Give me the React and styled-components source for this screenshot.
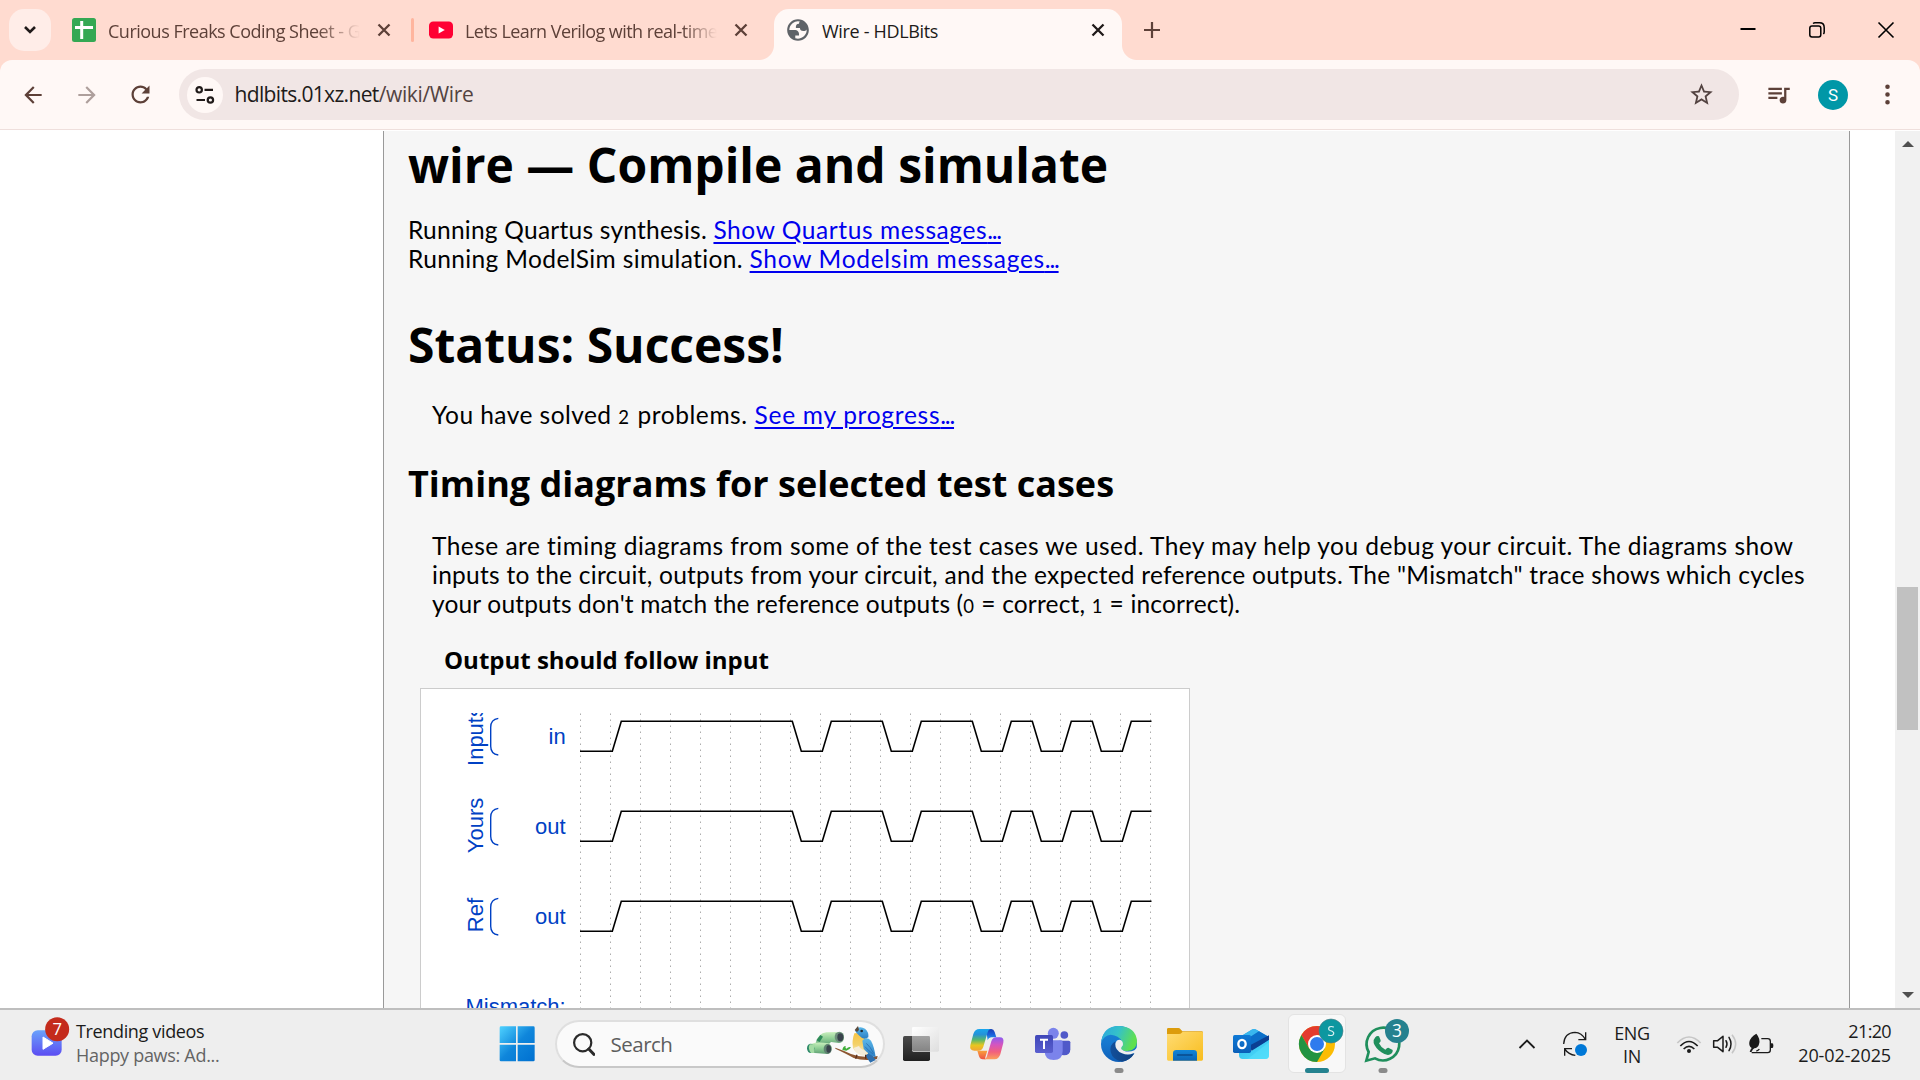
import React from 'react';
import styled, { createGlobalStyle, css } from 'styled-components';

const GlobalStyle = createGlobalStyle`
  * { box-sizing: border-box; }
  body { margin: 0; overflow: hidden; background: #fff; }
  svg { display: block; flex: none; }
`;

const ui = '"Open Sans", "Noto Sans", sans-serif';
const body = 'Lato, "Open Sans", sans-serif';

const Screen = styled.div`
  width: 1920px;
  height: 1080px;
  display: flex;
  flex-direction: column;
  overflow: hidden;
  font-family: ${ui};
`;

/* ---------- tab strip ---------- */

const TabStrip = styled.div`
  flex: none;
  height: 60px;
  display: flex;
  align-items: stretch;
  background: #ffdbd0;
`;

const TabSearch = styled.button`
  width: 42px;
  height: 42px;
  margin: 9px 6px 0 9px;
  padding: 0;
  border: 0;
  border-radius: 15px;
  background: #ffede8;
  display: grid;
  place-items: center;
`;

const Tab = styled.div`
  position: relative;
  width: ${(p) => p.$width}px;
  height: ${(p) => (p.$active ? 51 : 60)}px;
  align-self: flex-end;
  padding: 0 ${(p) => p.$right}px 0 ${(p) => p.$left}px;
  display: flex;
  align-items: center;
  color: ${(p) => (p.$active ? '#201a19' : '#5d4038')};
  ${(p) =>
    p.$active &&
    css`
      padding-bottom: 9px;
      background: #fff8f6;
      border-radius: 15px 15px 0 0;
      &::before,
      &::after {
        content: '';
        position: absolute;
        bottom: 0;
        width: 15px;
        height: 15px;
      }
      &::before {
        left: -15px;
        background: radial-gradient(circle at 0 0, transparent 14.5px, #fff8f6 15.5px);
      }
      &::after {
        right: -15px;
        background: radial-gradient(circle at 100% 0, transparent 14.5px, #fff8f6 15.5px);
      }
    `}
`;

const TabTitle = styled.span`
  flex: 1;
  min-width: 0;
  margin: 1px 11px 0 ${(p) => p.$gap || 12}px;
  overflow: hidden;
  white-space: nowrap;
  font-size: 18px;
  line-height: 26px;
  letter-spacing: ${(p) => p.$track}px;
  ${(p) =>
    p.$fade &&
    css`
      mask-image: linear-gradient(to right, #000 calc(100% - ${p.$fade}px), transparent calc(100% - 1px));
    `}
`;

const TabDivider = styled.div`
  width: 3px;
  height: 24px;
  margin-top: 18px;
  border-radius: 2px;
  background: #ffb59e;
`;

const NewTab = styled.div`
  width: 60px;
  display: grid;
  place-items: center;
`;

const WindowButtons = styled.div`
  margin-left: auto;
  display: flex;
`;

const WindowButton = styled.div`
  width: 69px;
  display: grid;
  place-items: center;
`;

/* ---------- toolbar ---------- */

const ToolbarBack = styled.div`
  flex: none;
  height: 71px;
  background: linear-gradient(#ffdbd0 30px, #fff 30px);
`;

const Toolbar = styled.div`
  height: 70px;
  display: flex;
  align-items: flex-start;
  padding-top: 9px;
  background: #fff8f6;
  border-bottom: 1px solid #efdfdc;
  border-radius: 12px 12px 0 0;
`;

const NavButton = styled.div`
  flex: none;
  width: ${(p) => p.$width || 54}px;
  height: 51px;
  display: grid;
  place-items: center;
  color: ${(p) => p.$color || '#5d4038'};
`;

const Omnibox = styled.div`
  flex: none;
  width: 1560px;
  height: 51px;
  margin-left: 6px;
  padding: 0 24px 0 8px;
  border-radius: 26px;
  background: #f1e6e5;
  display: flex;
  align-items: center;
`;

const SiteChip = styled.div`
  width: 36px;
  height: 36px;
  border-radius: 50%;
  background: #fff8f6;
  display: grid;
  place-items: center;
`;

const Url = styled.div`
  flex: 1;
  margin-left: 11.5px;
  font-size: 21px;
  line-height: 29px;
  white-space: nowrap;
  color: #201a19;
  letter-spacing: -0.66px;
`;

const UrlPath = styled.span`
  color: #534341;
  letter-spacing: -0.36px;
`;

const Avatar = styled.div`
  flex: none;
  width: 30px;
  height: 30px;
  margin: 11px 24px 0 0;
  border-radius: 50%;
  background: #0097a7;
  color: #fff;
  font: 17px/31px Roboto, sans-serif;
  text-align: center;
`;

/* ---------- page ---------- */

const Viewport = styled.div`
  flex: 1;
  min-height: 0;
  display: flex;
  background: #fff;
`;

const Panel = styled.main`
  width: 1467px;
  margin-left: 383px;
  padding: 1px 0 0 24px;
  border-left: 1px solid #999;
  border-right: 1px solid #999;
  background: #f6f6f6;
  overflow: hidden;
  color: #000;
`;

const Heading = styled.h1`
  margin: 0 0 ${(p) => p.$after}px;
  font: bold 48px/65px ${ui};
`;

const SubHeading = styled.h2`
  margin: 30px 0 23px;
  font: bold 36px/49px ${ui};
`;

const CaseTitle = styled.h3`
  margin: 25px 0 12px;
  padding-left: 36px;
  font: bold 24px/33px ${ui};
`;

const Text = styled.p`
  margin: 0 0 ${(p) => p.$after || 0}px;
  padding-left: ${(p) => (p.$indent ? 24 : 0)}px;
  font: 24.5px/29px ${body};
  white-space: nowrap;
`;

const Line = styled.span`
  display: block;
`;

const Run = styled.span`
  letter-spacing: ${(p) => p.$track}px;
`;

const Digit = styled.span`
  font-size: 18.5px;
  line-height: 1;
  letter-spacing: ${(p) => p.$track || 0.8}px;
`;

const Link = styled.a`
  color: #0000ee;
  letter-spacing: ${(p) => p.$track}px;
  text-decoration: underline;
  text-decoration-thickness: 2px;
  text-underline-offset: 3px;
`;

const Dots = styled.span`
  letter-spacing: -1.2px;
`;

const WaveBox = styled.div`
  width: 770px;
  height: 420px;
  margin-left: 12px;
  padding: 24px;
  border: 1px solid #ccc;
  background: #fff;
`;

const WaveText = styled.text`
  font: 22px "Liberation Sans", Arial, sans-serif;
  fill: #0041c4;
`;

const ScrollBar = styled.div`
  width: 25px;
  margin-left: auto;
  padding: 10px 2px 10px;
  display: flex;
  flex-direction: column;
  align-items: center;
  justify-content: space-between;
  background: #f1f1f1;
`;

const ScrollThumb = styled.div`
  width: 21px;
  height: 143px;
  margin: 440px 0 auto;
  background: #c1c1c1;
`;

/* ---------- taskbar ---------- */

const Taskbar = styled.footer`
  flex: none;
  height: 72px;
  display: flex;
  border-top: 2px solid #bebebe;
  background: #eeeeee;
`;

const Widget = styled.div`
  width: 484px;
  padding: 6px 0 0 31px;
  display: flex;
  align-items: flex-start;
`;

const WidgetText = styled.div`
  margin: 3px 0 0 5px;
  font-size: 18px;
  line-height: 24px;
  white-space: nowrap;
`;

const WidgetLine = styled.div`
  color: ${(p) => (p.$muted ? '#646464' : '#1b1b1b')};
  letter-spacing: ${(p) => (p.$muted ? -0.3 : -0.35)}px;
`;

const SearchBox = styled.div`
  width: 330px;
  height: 48px;
  margin: 10px 3px 0 5px;
  padding: 0 4px 0 16px;
  border: 2px solid #dfdfdf;
  border-bottom-color: #c8c8c8;
  border-radius: 24px;
  background: #fafafa;
  display: flex;
  align-items: center;
`;

const SearchLabel = styled.span`
  flex: 1;
  margin-left: 15.5px;
  font-size: 20.5px;
  line-height: 28px;
  letter-spacing: -0.5px;
  color: #5d5d5d;
`;

const Slot = styled.div`
  position: relative;
  width: 66px;
  padding-top: 16px;
  display: flex;
  justify-content: center;
`;

const ActiveSlot = styled(Slot)`
  width: 58px;
  height: 59px;
  margin: 4px 4px 0;
  padding-top: 11px;
  border: 1px solid #e3e3e3;
  border-radius: 6px;
  background: #f8f8f8;
`;

const Indicator = styled.div`
  position: absolute;
  left: 50%;
  top: ${(p) => (p.$active ? 53 : 58)}px;
  width: ${(p) => (p.$active ? 24 : 9)}px;
  height: 5px;
  transform: translateX(-50%);
  border-radius: 3px;
  background: ${(p) => (p.$active ? '#24828f' : '#8a8a8a')};
`;

const Tray = styled.div`
  margin-left: auto;
  padding-right: 29px;
  display: flex;
  align-items: flex-start;
  color: #1b1b1b;
  font-size: 18px;
  line-height: 23px;
  white-space: nowrap;
`;

const TrayIcon = styled.div`
  width: ${(p) => p.$width}px;
  height: 68px;
  margin-right: ${(p) => p.$gap}px;
  display: grid;
  place-items: center;
`;

const Language = styled.div`
  width: 36px;
  margin: 12px 26px 0 0;
  text-align: center;
  letter-spacing: -0.3px;
`;

const Clock = styled.div`
  width: 96px;
  margin-top: 9px;
  text-align: right;
  line-height: 24px;
`;

const Time = styled.div`
  letter-spacing: -0.65px;
`;

const DateText = styled.div`
  letter-spacing: -0.12px;
`;

/* ---------- small icons ---------- */

const Cross = ({ size = 11, w = 2.3, color = 'currentColor', box = 24 }) => (
  <svg width={box} height={box} viewBox={`${-box / 2} ${-box / 2} ${box} ${box}`}>
    <path
      d={`M${-size / 2} ${-size / 2}L${size / 2} ${size / 2}M${size / 2} ${-size / 2}L${-size / 2} ${size / 2}`}
      stroke={color}
      strokeWidth={w}
    />
  </svg>
);

const SheetsIcon = () => (
  <svg width="24" height="24" viewBox="0 0 24 24">
    <rect width="24" height="24" rx="2.5" fill="#34a853" />
    <path d="M3 9.5h18M9.7 3v18" stroke="#fff" strokeWidth="3" />
  </svg>
);

const YoutubeIcon = () => (
  <svg width="24" height="24" viewBox="0 0 24 24">
    <rect y="3.6" width="24" height="16.8" rx="4.2" fill="#ff0033" />
    <path d="M9.6 8.5v7l6.2-3.5z" fill="#fff" />
  </svg>
);

const GlobeIcon = () => (
  <svg width="26" height="26" viewBox="0 0 24 24" fill="#5f6368">
    <path fillRule="evenodd" d="M12 2C6.48 2 2 6.48 2 12s4.48 10 10 10 10-4.48 10-10S17.52 2 12 2zM4 12h4.4c3.407.022 4.922 1.73 4.543 5.127H9.488v2.47a8.004 8.004 0 0 0 10.498-8.083C19.327 12.504 18.332 13 17 13c-2.137 0-3.206-.916-3.206-2.75h-3.748c-.274-2.728.683-4.092 2.87-4.092 0-.975.327-1.597.811-1.97A8.004 8.004 0 0 0 4 12z" />
  </svg>
);

const MatIcon = ({ d, size = 24 }) => (
  <svg width={size} height={size} viewBox="0 0 24 24" fill="currentColor">
    <path d={d} />
  </svg>
);

const TuneIcon = () => (
  <svg width="22" height="20" viewBox="0 0 22 20" fill="none" stroke="#201a19" strokeWidth="2.2">
    <circle cx="5.2" cy="4.8" r="2.7" />
    <path d="M10.5 4.8h8.5M2.5 15h8.5" />
    <circle cx="16.4" cy="15" r="2.7" />
  </svg>
);

/* ---------- timing diagram ---------- */

const FALLS = [[792.3, 822.3], [882.3, 912.3], [972.3, 1002.3], [1032.3, 1062.3], [1092.3, 1122.3]];

const wavePath = (high) => {
  const low = high + 30;
  let d = `M580 ${low}H612.3L621.3 ${high}`;
  FALLS.forEach(([fall, rise]) => {
    d += `H${fall}L${fall + 9} ${low}H${rise}L${rise + 9} ${high}`;
  });
  return `${d}H1151.5`;
};

const SIGNALS = [
  { group: 'Inputs', label: 'in', high: 721.2, mid: 736 },
  { group: 'Yours', label: 'out', high: 811.2, mid: 825.5 },
  { group: 'Ref', label: 'out', high: 901.2, mid: 915 },
];

const TimingDiagram = () => (
  <svg width="720" height="295" viewBox="445 713 720 295">
    {Array.from({ length: 20 }, (_, i) => (
      <path key={i} d={`M${580.5 + i * 30} 713.6V1008`} stroke="#999" strokeWidth="1" strokeDasharray="1.2 4.8" />
    ))}
    {SIGNALS.map((s) => (
      <g key={s.group}>
        <path d={wavePath(s.high)} fill="none" stroke="#000" strokeWidth="1.6" />
        <WaveText x="565.7" y={s.high + 22.7} textAnchor="end">{s.label}</WaveText>
        <WaveText transform={`translate(483 ${s.mid}) rotate(-90)`} textAnchor="middle">{s.group}</WaveText>
        <path
          d={`M498.3 ${s.high - 2.8}C493 ${s.high - 2} 490.7 ${s.high + 2} 490.7 ${s.high + 6}V${s.high + 25}C490.7 ${s.high + 29} 493 ${s.high + 33} 498.3 ${s.high + 33.8}`}
          fill="none"
          stroke="#0041c4"
          strokeWidth="1.4"
        />
      </g>
    ))}
    <WaveText x="565.7" y="1014" textAnchor="end">Mismatch:</WaveText>
  </svg>
);

/* ---------- taskbar icons ---------- */

const AppIcon = ({ x, children, y = 78, w = 108, h = 108 }) => (
  <svg width={w / 3} height={h / 3} viewBox={`${x} ${y} ${w} ${h}`} overflow="visible">
    {children}
  </svg>
);

const Stops = ({ id, colors, x2 = 0, y2 = 1 }) => (
  <linearGradient id={id} x1="0" y1="0" x2={x2} y2={y2}>
    {colors.map((c, i) => (
      <stop key={c} offset={i / (colors.length - 1)} stopColor={c} />
    ))}
  </linearGradient>
);

const BadgeText = styled.text`
  font: ${(p) => p.$size}px ${ui};
  fill: #fff;
  text-anchor: middle;
`;

const WidgetIcon = () => (
  <svg width="40" height="42" viewBox="94 48 120 126">
    <defs><Stops id="wg" colors={['#6aa2fb', '#5c4df2']} /></defs>
    <rect x="96" y="91" width="90" height="76" rx="18" fill="url(#wg)" />
    <path d="M130 111v37l30-18.500z" fill="#fff" stroke="#fff" strokeWidth="3" strokeLinejoin="round" />
    <circle cx="172.500" cy="88" r="36" fill="#c42b1c" />
    <BadgeText $size={50} x="172.500" y="106">7</BadgeText>
  </svg>
);

const StartIcon = () => (
  <AppIcon x={58} y={80}>
    <defs><Stops id="st" colors={['#4fd2ff', '#0f86db', '#0070d0']} x2={1} /></defs>
    <path d="M60 85q0-4 4-4H109V131H60zM114 81h47q4 0 4 4V131H114zM60 136H109V186H64q-4 0-4-4zM114 136H165V182q0 4-4 4H114z" fill="url(#st)" />
  </AppIcon>
);

const BirdIcon = () => (
  <svg width="74" height="40" viewBox="972 72 222 120">
    <defs>
      <Stops id="bn" colors={['#c9efbd', '#8fcf95', '#5f9f74']} />
      <Stops id="bb" colors={['#f6c445', '#f3d168', '#fbf3dd']} />
      <Stops id="bw" colors={['#5bb8ea', '#2c7fc4']} />
    </defs>
    <path d="M1004 128Q1012 100 1036 97L1078 96Q1090 100 1089 114T1074 129L1050 126 1040 136z" fill="url(#bn)" />
    <ellipse cx="1075" cy="111" rx="14" ry="16" fill="#6d8f7c" />
    <ellipse cx="1078" cy="112" rx="9" ry="12" fill="#39434c" />
    <path d="M1006 121l12-16 8 5-10 16z" fill="#2f8a5a" />
    <path d="M992 131Q1010 124 1042 130 1054 136 1052 147T1040 162L992 158z" fill="url(#bn)" />
    <ellipse cx="989" cy="145" rx="11" ry="14" fill="#2f8a6a" />
    <path d="M986 133h18q-8 10-4 26h-10q-10-12-4-26z" fill="#a4dca4" />
    <ellipse cx="1040" cy="147" rx="12" ry="15" fill="#5f8271" />
    <ellipse cx="1043" cy="147" rx="7" ry="11" fill="#39434c" />
    <path d="M1063 143Q1090 152 1110 162 1145 176 1190 168L1188 177Q1150 184 1118 174 1098 162 1063 146z" fill="#8d5630" />
    <path d="M1084 150q2-12 10-12-2 6 2 8 8-8 14-4-4 8-14 10z" fill="#3fae3a" />
    <path d="M1148 160l20-4 16 24-16 8z" fill="#2e6fae" />
    <path d="M1120 100Q1112 122 1116 144 1126 164 1150 168 1172 160 1166 132L1148 98z" fill="url(#bb)" />
    <path d="M1118 144q8 20 32 24l8-14q-22-6-24-16z" fill="#f4ecd9" />
    <path d="M1128 84Q1140 78 1152 86 1164 96 1162 112 1148 122 1136 108 1126 100 1122 92z" fill="url(#bw)" />
    <path d="M1144 122Q1156 108 1170 122 1180 140 1184 172 1160 162 1148 146z" fill="url(#bw)" />
    <path d="M1156 130q12 10 22 30M1152 140q10 12 24 22" stroke="#2a6fb0" strokeWidth="2.500" fill="none" />
    <path d="M1121 90l10-12 3 12-6 6z" fill="#5b4a3c" />
    <circle cx="1142" cy="93" r="4" fill="#1f2a33" />
    <path d="M1128 164l-4 12M1154 164v12" stroke="#5a2d1a" strokeWidth="4" />
  </svg>
);

const TaskViewIcon = () => (
  <AppIcon x={1269}>
    <defs>
      <Stops id="tv" colors={['#4a4a4a', '#202020']} />
      <Stops id="tw" colors={['#ffffff', '#dedede']} x2={1} />
      <Stops id="tg" colors={['#a2a2a2', '#858585']} />
    </defs>
    <rect x="1269" y="108" width="81" height="75" rx="5" fill="url(#tv)" />
    <rect x="1296" y="81" width="81" height="74" rx="4" fill="url(#tw)" />
    <path d="M1296 108H1346q4 0 4 4V153H1300q-4 0-4-4z" fill="url(#tg)" />
  </AppIcon>
);

const CopilotIcon = () => (
  <AppIcon x={87}>
    <defs>
      <Stops id="ca" colors={['#18a6ee', '#2592d8', '#59b86a', '#e8c61f', '#f3a533']} />
      <Stops id="cb" colors={['#8d5cf0', '#d455c0', '#f2607c', '#fba05a']} />
      <Stops id="cc" colors={['#1a3fb4', '#1b62dc', '#2aa9ee']} />
      <Stops id="cd" colors={['#f9a13c', '#ee5145']} />
    </defs>
    <path d="M138 87h16q7 0 10 9l5 16h-14q-9 0-12 9z" fill="url(#cc)" />
    <path d="M112 152h30l-6 20q-2 6 2 6h-10q-8 0-11-9z" fill="url(#cd)" />
    <path d="M118 87h36q-8 0-11 10l-13 43q-4 12-15 12h-12q-15 0-12-16l9-34q5-15 18-15z" fill="url(#ca)" />
    <path d="M164 178h-34q8 0 11-10l13-44q4-12 15-12h10q14 0 11 16l-9 35q-5 15-17 15z" fill="url(#cb)" />
  </AppIcon>
);

const TeamsIcon = () => (
  <AppIcon x={285}>
    <defs><Stops id="ta" colors={['#3f46b8', '#5a5fcf']} /></defs>
    <circle cx="373" cy="105" r="11.500" fill="#5059c9" />
    <path d="M356 122h30q5 0 5 5v21q0 18-19 18-16 0-16-16z" fill="#5059c9" />
    <circle cx="340" cy="100" r="16.500" fill="#7b83eb" />
    <path d="M316 121h47q5 0 5 5v27q0 27-27 27t-27-27z" fill="#7b83eb" />
    <rect x="285" y="105" width="54" height="54" rx="5" fill="url(#ta)" />
    <path d="M300 119h24M312 119v28" stroke="#fff" strokeWidth="6" />
  </AppIcon>
);

const EdgeIcon = () => (
  <AppIcon x={483}>
    <defs>
      <Stops id="ea" colors={['#2aa7e0', '#35c1c9', '#5fe04f']} x2={1} y2={0.3} />
      <Stops id="eb" colors={['#1a86d6', '#1577cf', '#0f5fb8']} />
      <Stops id="ec" colors={['#134f9a', '#0e3f7d']} x2={1} y2={0} />
    </defs>
    <circle cx="537" cy="132" r="54" fill="url(#eb)" />
    <path d="M484 126Q489 78 537 78 588 80 591 124 591 152 562 153 546 153 543 146 542 142 547 139 551 133 546 124 536 106 512 104 492 106 484 126z" fill="url(#ea)" />
    <path d="M526 124Q508 134 512 156 518 180 546 185 570 182 583 160 562 168 544 158 524 146 526 124z" fill="url(#ec)" />
    <path d="M549 132q1 5-4 9-5 6 6 11 15 6 32-1l8-8 2 20-10 8q3-5 2-10-2-2-5-1-16 7-34 0-21-9-20-28 2-13 13-13 10 2 10 13z" fill="#eee" />
  </AppIcon>
);

const FolderIcon = () => (
  <AppIcon x={681}>
    <defs>
      <Stops id="fa" colors={['#ffdc74', '#f8bd1e']} x2={1} />
      <Stops id="fb" colors={['#1185d8', '#0d65b5']} />
    </defs>
    <path d="M681 88q0-4 4-4h30q4 0 6 3l6 7h58q4 0 4 4v30H681z" fill="#dc9c0c" />
    <path d="M681 102h36q5 0 8-4l3-3h57q4 0 4 4v79q0 4-4 4H685q-4 0-4-4z" fill="url(#fa)" />
    <path d="M699 182v-22q0-10 10-10h52q10 0 10 10v22z" fill="url(#fb)" />
    <path d="M713 165h43" stroke="#0a4a8a" strokeWidth="5" strokeLinecap="round" />
  </AppIcon>
);

const OutlookIcon = () => (
  <AppIcon x={879}>
    <defs>
      <Stops id="oa" colors={['#30b8ec', '#4fe0fb']} x2={1} />
      <Stops id="ob" colors={['#0f7ad6', '#0a5fb8']} />
    </defs>
    <path d="M897 112l38-23q7-4 14 0l38 22v22l-90 14z" fill="#1b9de2" />
    <path d="M911 104l24-15q7-4 14 0l8 5-36 23z" fill="#39b7ee" />
    <path d="M921 117l36-23 26 15q4 3 4 8l-60 36-16-8z" fill="#0c6fc9" />
    <path d="M930 136l57-30v14l-52 36z" fill="#0b3f93" />
    <path d="M897 148l38 4 52-32v46q0 11-11 11h-68q-11 0-11-11z" fill="url(#oa)" />
    <path d="M923 177l64-50v39q0 11-11 11z" fill="#55ddfa" opacity=".65" />
    <rect x="879" y="105" width="54" height="54" rx="5" fill="url(#ob)" />
    <ellipse cx="906" cy="132" rx="11" ry="12.500" fill="none" stroke="#fff" strokeWidth="7" />
  </AppIcon>
);

const ChromeIcon = () => (
  <AppIcon x={1077}>
    <circle cx="1131" cy="132" r="54" fill="#fbbc04" />
    <path d="M1131 105H1177.800A54 54 0 0 0 1084.200 105L1107.600 145.500z" fill="#e33b2e" />
    <path d="M1084.200 105L1107.600 145.500 1131 159 1154.400 145.500 1131 186A54 54 0 0 1 1084.200 105z" fill="#229342" />
    <circle cx="1131" cy="132" r="27" fill="#fff" />
    <circle cx="1131" cy="132" r="21" fill="#2f7bee" />
    <circle cx="1173" cy="93" r="36" fill="#0d97a0" stroke="#4b7f86" strokeWidth="2" />
    <BadgeText $size={42} x="1173" y="108" opacity="0.85">S</BadgeText>
  </AppIcon>
);

const WhatsappIcon = () => (
  <AppIcon x={1275}>
    <path d="M1279 182l7-26A49 49 0 1 1 1305 175z" fill="none" stroke="#1f8f5c" strokeWidth="8" strokeLinejoin="miter" />
    <path d="M1306 112q5-6 11-3l5 12q1 4-5 9 6 13 19 19 6-7 9-6l13 7q1 9-7 13-10 6-27-6-18-13-23-28-2-10 5-17z" fill="#1f8f5c" />
    <circle cx="1371" cy="93" r="36" fill="#26818f" />
    <BadgeText $size={52} x="1371" y="111">3</BadgeText>
  </AppIcon>
);

export default function App() {
  return (
    <Screen>
      <GlobalStyle />
      <TabStrip>
        <TabSearch>
          <svg width="14" height="10" viewBox="0 0 14 10"><path d="M2 2l5 5 5-5" fill="none" stroke="#201a19" strokeWidth="2.600" /></svg>
        </TabSearch>
        <Tab $width={353.5} $left={15} $right={14.5}>
          <SheetsIcon />
          <TabTitle $track={-0.5} $fade={44}>Curious Freaks Coding Sheet - G</TabTitle>
          <Cross />
        </Tab>
        <TabDivider />
        <Tab $width={360.5} $left={15.5} $right={21}>
          <YoutubeIcon />
          <TabTitle $track={-0.55} $fade={36}>Lets Learn Verilog with real-time</TabTitle>
          <Cross />
        </Tab>
        <Tab $active $width={348} $left={11} $right={12}>
          <GlobeIcon />
          <TabTitle $gap={11} $track={-0.33}>Wire - HDLBits</TabTitle>
          <Cross />
        </Tab>
        <NewTab>
          <svg width="16" height="16" viewBox="0 0 16 16"><path d="M8 0v16M0 8h16" stroke="#5d4038" strokeWidth="2.200" /></svg>
        </NewTab>
        <WindowButtons>
          <WindowButton>
            <svg width="16" height="16" viewBox="0 0 16 16"><path d="M.5 7h15" stroke="#000" strokeWidth="2" /></svg>
          </WindowButton>
          <WindowButton>
            <svg width="16" height="16" viewBox="0 0 16 16" fill="none" stroke="#000" strokeWidth="1.500">
              <rect x=".8" y="4" width="11" height="11" rx="2.200" />
              <path d="M4 1.500q1-.7 2-.7h4.500q4.700 0 4.700 4.700V10q0 1.200-.8 2" />
            </svg>
          </WindowButton>
          <WindowButton><Cross size={15} w={1.6} color="#000" /></WindowButton>
        </WindowButtons>
      </TabStrip>

      <ToolbarBack>
        <Toolbar>
          <NavButton $width={66}><MatIcon size={26} d="M20 11H7.830l5.590-5.590L12 4l-8 8 8 8 1.410-1.410L7.830 13H20v-2z" /></NavButton>
          <NavButton $width={42} $color="#ae9f9c"><MatIcon size={26} d="M12 4l-1.410 1.410L16.170 11H4v2h12.170l-5.580 5.590L12 20l8-8z" /></NavButton>
          <NavButton $width={65} $color="#5d4038"><MatIcon size={27} d="M17.650 6.350C16.200 4.900 14.210 4 12 4c-4.420 0-7.990 3.580-7.990 8s3.570 8 7.990 8c3.730 0 6.840-2.550 7.730-6h-2.080c-.82 2.330-3.040 4-5.650 4-3.310 0-6-2.690-6-6s2.690-6 6-6c1.660 0 3.140.69 4.220 1.780L13 11h7V4l-2.350 2.350z" /></NavButton>
          <Omnibox style={undefined}>
            <SiteChip><TuneIcon /></SiteChip>
            <Url>hdlbits.01xz.net<UrlPath>/wiki/Wire</UrlPath></Url>
            <NavButton $width={27} $color="#534341">
              <MatIcon size={27} d="M22 9.240l-7.190-.62L12 2 9.190 8.630 2 9.240l5.460 4.730L5.820 21 12 17.270 18.180 21l-1.630-7.030L22 9.240zM12 15.400l-3.760 2.270 1-4.280-3.320-2.880 4.380-.38L12 6.100l1.710 4.040 4.380.38-3.320 2.880 1 4.280L12 15.400z" />
            </NavButton>
          </Omnibox>
          <NavButton $width={79}><MatIcon size={27} d="M15 6H3v2h12V6zm0 4H3v2h12v-2zM3 16h8v-2H3v2zM17 6v8.180c-.31-.11-.65-.18-1-.18-1.660 0-3 1.340-3 3s1.340 3 3 3 3-1.340 3-3V8h3V6h-5z" /></NavButton>
          <Avatar>S</Avatar>
          <NavButton $width={30}><MatIcon size={29} d="M12 7.500a1.900 1.900 0 1 0 0-3.800 1.900 1.900 0 0 0 0 3.800zM12 13.900a1.900 1.900 0 1 0 0-3.800 1.900 1.900 0 0 0 0 3.800zM12 20.300a1.900 1.900 0 1 0 0-3.800 1.900 1.900 0 0 0 0 3.800z" /></NavButton>
        </Toolbar>
      </ToolbarBack>

      <Viewport>
        <Panel>
          <Heading $after={18}>wire — Compile and simulate</Heading>
          <Text $after={39}>
            <Line><Run $track={0.24}>Running Quartus synthesis. </Run><Link $track={0.58}>Show Quartus messages<Dots>...</Dots></Link></Line>
            <Line><Run $track={0.37}>Running ModelSim simulation. </Run><Link $track={0.71}>Show Modelsim messages<Dots>...</Dots></Link></Line>
          </Text>
          <Heading $after={23}>Status: Success!</Heading>
          <Text $indent>
            <Line><Run $track={0.45}>You have solved </Run><Digit $track={1.6}>2</Digit><Run $track={0.58}> problems. </Run><Link $track={0.73}>See my progress<Dots>...</Dots></Link></Line>
          </Text>
          <SubHeading>Timing diagrams for selected test cases</SubHeading>
          <Text $indent>
            <Line><Run $track={0.462}>These are timing diagrams from some of the test cases we used. They may help you debug your circuit. The diagrams show</Run></Line>
            <Line><Run $track={0.26}>inputs to the circuit, outputs from your circuit, and the expected reference outputs. The "Mismatch" trace shows which cycles</Run></Line>
            <Line><Run $track={0.17}>your outputs don't match the reference outputs (<Digit>0</Digit> = correct, <Digit>1</Digit> = incorrect).</Run></Line>
          </Text>
          <CaseTitle>Output should follow input</CaseTitle>
          <WaveBox><TimingDiagram /></WaveBox>
        </Panel>
        <ScrollBar>
          <svg width="12" height="6" viewBox="0 0 12 6"><path d="M0 6L6 0l6 6z" fill="#505050" /></svg>
          <ScrollThumb />
          <svg width="12" height="6" viewBox="0 0 12 6"><path d="M0 0h12L6 6z" fill="#505050" /></svg>
        </ScrollBar>
      </Viewport>

      <Taskbar>
        <Widget>
          <WidgetIcon />
          <WidgetText>
            <WidgetLine>Trending videos</WidgetLine>
            <WidgetLine $muted>Happy paws: Ad...</WidgetLine>
          </WidgetText>
        </Widget>
        <Slot><StartIcon /></Slot>
        <SearchBox>
          <svg width="22" height="23" viewBox="0 0 22 23" fill="none" stroke="#2a2a2a">
            <circle cx="9.700" cy="9.700" r="8.600" strokeWidth="2.200" />
            <path d="M15.800 16l5 5.300" strokeWidth="3" strokeLinecap="round" />
          </svg>
          <SearchLabel>Search</SearchLabel>
          <BirdIcon />
        </SearchBox>
        <Slot><TaskViewIcon /></Slot>
        <Slot><CopilotIcon /></Slot>
        <Slot><TeamsIcon /></Slot>
        <Slot><EdgeIcon /><Indicator /></Slot>
        <Slot><FolderIcon /></Slot>
        <Slot><OutlookIcon /></Slot>
        <ActiveSlot><ChromeIcon /><Indicator $active /></ActiveSlot>
        <Slot><WhatsappIcon /><Indicator /></Slot>
        <Tray>
          <TrayIcon $width={18} $gap={26}>
            <svg width="18" height="10" viewBox="0 0 18 10"><path d="M1.500 9L9 1.500 16.500 9" fill="none" stroke="#1b1b1b" strokeWidth="1.800" /></svg>
          </TrayIcon>
          <TrayIcon $width={26} $gap={26}>
            <svg width="26" height="26" viewBox="366 153 78 78" fill="none" stroke="#1b1b1b" strokeWidth="4">
              <path d="M371 192Q373 158 405 157 425 158 436 178M437 157v22h-22M406 226Q386 224 374 207M374 227v-21h22" />
              <circle cx="423" cy="210" r="18" fill="#0078d7" stroke="none" />
            </svg>
          </TrayIcon>
          <Language>ENG<br />IN</Language>
          <TrayIcon $width={26} $gap={10}>
            <svg width="26" height="20" viewBox="708 159 78 60" fill="none" strokeWidth="5">
              <path d="M712 186Q747 150 782 186" stroke="#c6c6c6" />
              <path d="M721 195Q747 168 773 195M731 204Q747 188 763 204" stroke="#1b1b1b" />
              <circle cx="747" cy="210" r="6" fill="#1b1b1b" />
            </svg>
          </TrayIcon>
          <TrayIcon $width={26} $gap={10}>
            <svg width="26" height="22" viewBox="816 159 78 66" fill="none" stroke="#1b1b1b" strokeWidth="4.500" strokeLinejoin="round">
              <path d="M821 182h12l16-13v46l-16-13h-12z" />
              <path d="M858 182q6 10 0 20M867 172q12 20 0 40" strokeLinecap="round" />
              <path d="M876 164q22 28 0 56" stroke="#c6c6c6" />
            </svg>
          </TrayIcon>
          <TrayIcon $width={26} $gap={21}>
            <svg width="26" height="22" viewBox="924 153 78 66" fill="none" stroke="#1b1b1b" strokeWidth="4">
              <path d="M964 170h19q8 0 8 8v26q0 8-8 8h-48" />
              <path d="M992 184h5q3 0 3 7t-3 7h-5z" fill="#1b1b1b" stroke="none" />
              <path d="M949 155q13 15 8 32-3 11-14 12-5 2-8 10-2 2-6 1 2-8 6-12-9-6-7-18 3-15 21-25z" fill="#1b1b1b" stroke="none" />
              <path d="M958 201q-3 5-9 6" />
            </svg>
          </TrayIcon>
          <Clock>
            <Time>21:20</Time>
            <DateText>20-02-2025</DateText>
          </Clock>
        </Tray>
      </Taskbar>
    </Screen>
  );
}
